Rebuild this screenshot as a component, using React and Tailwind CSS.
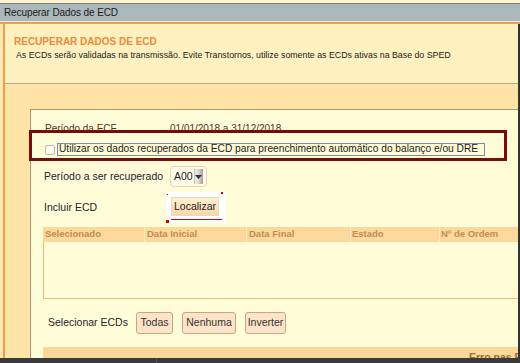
import React from "react";

export default function App() {
  const font = { fontFamily: '"Liberation Sans", Arial, sans-serif' };
  return (
    <div
      className="relative w-[520px] h-[363px] overflow-hidden flex flex-col bg-[#fff2c8] text-[#3a3034]"
      style={font}
    >
      {/* top strip */}
      <div className="h-[4px] shrink-0 bg-[#fff4d2] border-b border-[#8a8070]" />
      {/* title bar */}
      <div className="h-[18px] shrink-0 bg-[#aab8bc] flex items-center pl-[4px] text-[10px] tracking-[-0.1px] text-[#1a1a1a] border-b border-[#e8ecec]">
        Recuperar Dados de ECD
      </div>
      <div className="h-[2px] shrink-0 bg-[#f0a040]" />

      {/* body */}
      <div className="flex-1 min-h-0 flex">
        <div className="w-[3px] shrink-0 bg-[#ffe8b4]" />
        <div className="w-[2px] shrink-0 bg-[#f0a040]" />
        <div className="flex-1 min-w-0 flex flex-col">
          {/* header panel */}
          <div className="h-[60px] shrink-0 bg-[#fff0c0] border-b border-[#b8a888] pt-[11px] pl-[9px]">
            <div className="text-[10px] leading-[13px] font-bold text-[#ec8a3c]">
              RECUPERAR DADOS DE ECD
            </div>
            <div className="mt-[2px] pl-[2px] text-[8.8px] leading-[11px] text-[#222]">
              As ECDs serão validadas na transmissão. Evite Transtornos, utilize somente as ECDs ativas na Base do SPED
            </div>
          </div>
          {/* lower */}
          <div className="flex-1 min-h-0 bg-[#ffe4a8] pl-[25px] pt-[25px]">
            <div className="h-full bg-[#fffcd8] border-l border-t border-[#a89878] text-[10.5px]">
              {/* Periodo da ECF */}
              <div className="mt-[12px] h-[12px] flex items-center text-[10px] text-[#5a2e2e] whitespace-nowrap">
                <div className="w-[139px] pl-[14px]">Período da ECF</div>
                <div>01/01/2018 a 31/12/2018</div>
              </div>
              {/* checkbox row */}
              <div className="mt-[9px] h-[13px] flex items-center">
                <div className="ml-[14px] w-[10px] h-[10px] rounded-[2px] border border-[#c0b8b0] bg-[#fffef0]" />
                <div className="ml-[2px] h-[13px] w-[428px] border border-[#7a8aa8] flex items-center pl-[1px] text-[10.2px] text-[#222] leading-none whitespace-nowrap overflow-hidden">
                  Utilizar os dados recuperados da ECD para preenchimento automático do balanço e/ou DRE
                </div>
              </div>
              {/* Periodo a ser recuperado */}
              <div className="mt-[10px] h-[21px] flex items-center">
                <div className="w-[139px] pl-[13px] text-[#2a2030] whitespace-nowrap">Período a ser recuperado</div>
                <div className="w-[37px] h-[21px] rounded-[4px] border border-[#e8d4b4] bg-[#fffcea] flex items-center pl-[3px] pr-[3px]">
                  <span className="text-[#1a1a1a]">A00</span>
                  <span className="ml-[1px] w-[12px] h-[15px] bg-gradient-to-r from-[#f2eee8] via-[#d8d4ce] to-[#a09a92] border-l border-[#c8c0b8] flex items-center justify-center">
                    <svg width="7" height="4" viewBox="0 0 7 4"><path d="M0 0h7L3.5 4z" fill="#333" /></svg>
                  </span>
                </div>
              </div>
              {/* Incluir ECD */}
              <div className="mt-[5px] h-[31px] flex items-center">
                <div className="w-[135px] pl-[13px] text-[#2a2030]">Incluir ECD</div>
                <div className="relative w-[60px] h-[31px] bg-white">
                  <div className="absolute left-[5px] top-[5px] w-[48px] h-[19px] border border-[#e8d8c0] bg-gradient-to-b from-[#fff0d0] to-[#f8d8a4] flex items-center justify-center text-[#2a2030]">
                    Localizar
                  </div>
                  <span className="absolute left-[1px] top-[2px] w-[1px] h-[1px] bg-[#e00000]" />
                  <span className="absolute left-[55px] top-0 w-[2px] h-[2px] bg-[#e00000]" />
                  <span className="absolute left-0 top-[28px] w-[3px] h-[3px] bg-[#e00000]" />
                  <span className="absolute left-[5px] top-[27px] w-[51px] h-[1px] bg-[#e00000]" />
                </div>
              </div>
              {/* table header */}
              <div className="mt-[4px] ml-[12px] h-[15px] bg-[#fcd89a] flex items-center text-[9.5px] font-bold text-[#c08c56]">
                <div className="w-[102px] pl-[2px] border-r border-[#fde8c0]">Selecionado</div>
                <div className="w-[102px] pl-[2px] border-r border-[#fde8c0]">Data Inicial</div>
                <div className="w-[104px] pl-[2px] border-r border-[#fde8c0]">Data Final</div>
                <div className="w-[89px] pl-[1px] border-r border-[#fde8c0]">Estado</div>
                <div className="pl-[1px] whitespace-nowrap">Nº de Ordem</div>
              </div>
              {/* table body */}
              <div className="ml-[12px] h-[57px] border-l border-b border-[#f8b878]" />
              {/* Selecionar ECDs */}
              <div className="mt-[13px] h-[22px] flex items-center">
                <div className="w-[105px] pl-[17px] text-[#2a2030] whitespace-nowrap">Selecionar ECDs</div>
                <div className="w-[37px] h-[22px] rounded-[3px] border-[1.5px] border-[#c8a680] bg-[#fce4c8] flex items-center justify-center">Todas</div>
                <div className="ml-[9px] w-[54px] h-[22px] rounded-[3px] border-[1.5px] border-[#c8a680] bg-[#fce4c8] flex items-center justify-center">Nenhuma</div>
                <div className="ml-[9px] w-[41px] h-[22px] rounded-[3px] border-[1.5px] border-[#c8a680] bg-[#fce4c8] flex items-center justify-center">Inverter</div>
              </div>
              {/* bottom strip */}
              <div className="mt-[13px] ml-[12px] h-[14px] bg-[#fcd89a] pl-[426px] text-[#9a6a3a] text-[10.5px] font-bold overflow-hidden whitespace-nowrap">
                <span className="block pt-[3px]">Erro nas Fontes</span>
              </div>
            </div>
          </div>
        </div>
        <div className="w-[2px] shrink-0 bg-[#333]" />
      </div>

      {/* bottom dark bar */}
      <div className="h-[5px] shrink-0 bg-[#3a3a3a] flex">
        <div className="w-[157px] border-r border-[#555]" />
      </div>

      {/* highlight overlay */}
      <div className="absolute left-[29px] top-[130px] w-[478px] h-[31px] border-[3px] border-[#7b0a0a] pointer-events-none" />
    </div>
  );
}
